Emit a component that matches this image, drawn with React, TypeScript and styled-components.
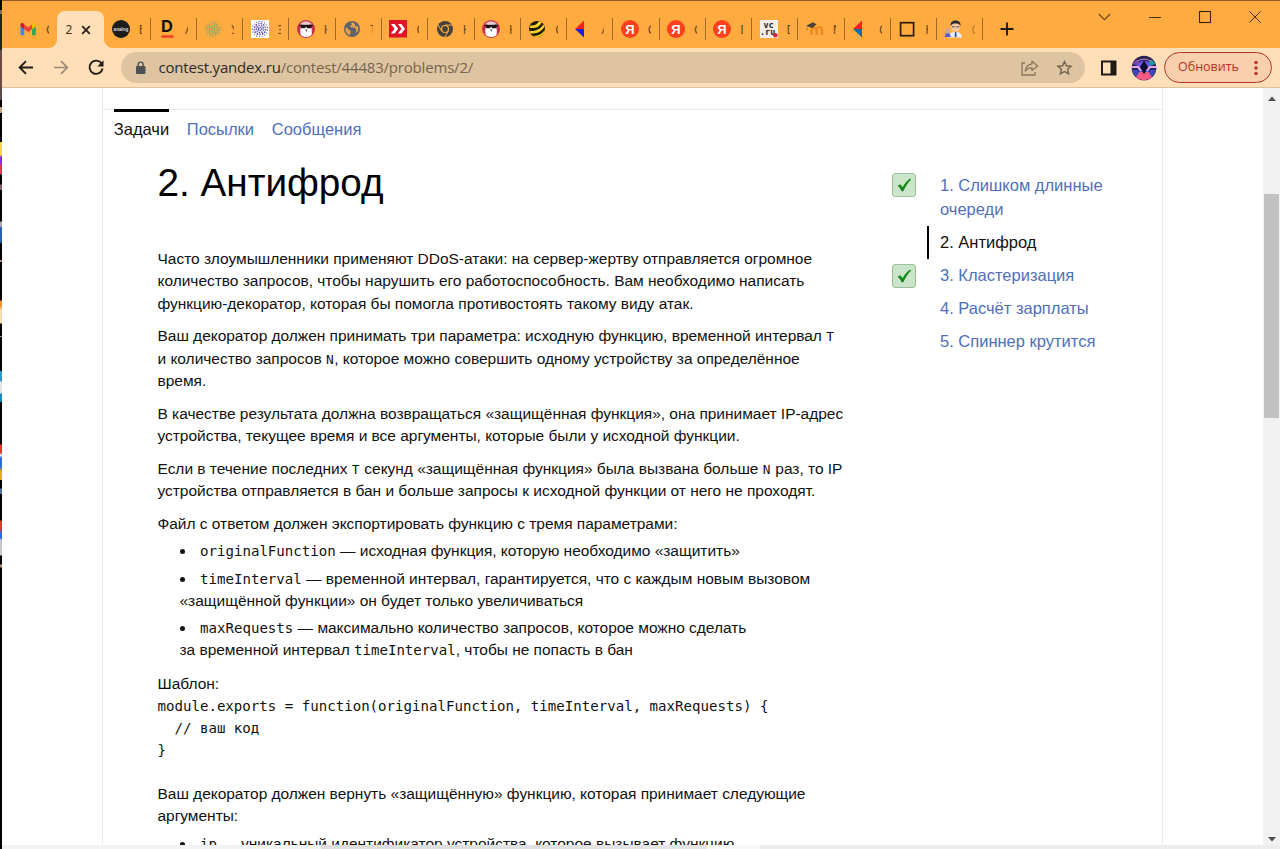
import React from 'react';
import styled, { createGlobalStyle } from 'styled-components';

const GlobalStyle = createGlobalStyle`
  * { box-sizing: border-box; }
  html, body { margin: 0; padding: 0; overflow: hidden; }
  body { background: #fff; font-family: "Liberation Sans", Arial, sans-serif; color: #111; }
`;

/* ---------- window frame ---------- */

const Desktop = styled.div`
  display: flex;
  width: 1280px;
  height: 849px;
  overflow: hidden;
`;

const DesktopEdge = styled.div`
  flex: none;
  width: 2px;
  background: linear-gradient(
    #000 0 10px, #8a6a60 10px 14px, #222 14px 50px, #6b4a44 50px 88px, #5a4a48 88px 100px, #000 100px 107px,
    #c9a088 107px 113px, #000 113px 142px, #f0d840 142px 155px, #8a30d0 157px 164px, #e03a50 165px 174px,
    #000 175px 184px, #8a6070 185px 190px, #000 190px 221px, #aaa 222px 226px, #2a5fb0 228px 242px, #000 244px 260px,
    #b08a70 260px 262px, #000 262px 300px, #f09030 301px 306px, #f4dcae 310px 323px, #000 324px 336px, #999 336px 337px,
    #000 337px 371px, #2e9ac8 371px 381px, #e4e0e8 382px 393px, #1c8ab8 394px 402px, #000 402px 444px,
    #e03a30 445px 453px, #fff 455px, #2a6ae0 458px 467px, #e0b010 471px 480px, #000 480px 488px, #5070a0 489px 494px,
    #000 494px 520px, #e03a30 521px 528px, #2a6ae0 534px 538px, #c8c8c8 540px 555px, #000 556px 564px,
    #b09080 565px 567px, #000 568px 845px
  );
`;

const Window = styled.div`
  flex: 1;
  min-width: 0;
  display: flex;
  flex-direction: column;
  border-top: 1px solid #8a5c22;
`;

/* ---------- tab strip ---------- */

const TabStrip = styled.div`
  display: flex;
  height: 47px;
  flex: none;
  background: #ffab40;
  padding-left: 9.5px;
`;

const tabFont = `
  font-family: "Noto Sans", "Open Sans", sans-serif;
  font-size: 12px;
  color: #4a3418;
`;

const Tab = styled.div<{ $bare?: boolean }>`
  flex: none;
  display: flex;
  align-items: center;
  width: ${(p) => (p.$bare ? 45.9 : 46.28)}px;
  height: 22px;
  margin-top: 17px;
  padding-left: ${(p) => (p.$bare ? 7.5 : 7.4)}px;
  border-right: ${(p) => (p.$bare ? '0' : '1px solid #9c6a2a')};
`;

const TabLabel = styled.span<{ $faint?: boolean }>`
  ${tabFont}
  width: 3px;
  margin-left: 9px;
  overflow: hidden;
  white-space: nowrap;
  opacity: ${(p) => (p.$faint ? 0.4 : 0.85)};
`;

const ActiveTab = styled.div`
  position: relative;
  flex: none;
  display: flex;
  align-items: center;
  width: 47px;
  height: 37px;
  margin-top: 10px;
  padding-left: 8px;
  gap: 9px;
  background: #ffdfb8;
  border-radius: 8px 8px 0 0;
  ${tabFont}
  &::before, &::after {
    content: '';
    position: absolute;
    bottom: 0;
    width: 8px;
    height: 8px;
  }
  &::before { left: -8px; background: radial-gradient(circle at 0 0, transparent 7.5px, #ffdfb8 8px); }
  &::after { right: -8px; background: radial-gradient(circle at 100% 0, transparent 7.5px, #ffdfb8 8px); }
`;

const NewTab = styled.div`
  display: flex;
  align-items: center;
  margin: 8px 0 0 17px;
  height: 40px;
`;

const WindowButtons = styled.div`
  display: flex;
  align-items: center;
  gap: 38px;
  height: 32px;
  margin-left: auto;
  padding-right: 19px;
`;

const Icon = styled.svg`
  display: block;
  flex: none;
  overflow: visible;
`;

const Fav = ({ children }: { children: React.ReactNode }) => (
  <Icon width="18" height="18" viewBox="0 0 18 18">{children}</Icon>
);

const Dots = ({ colors }: { colors: string[] }) => (
  <>
    {[1.6, 3.6, 5.6, 7.6].map((r, ring) =>
      Array.from({ length: 5 + ring * 4 }, (_, i) => {
        const a = (i / (5 + ring * 4)) * Math.PI * 2 + ring * 0.3;
        return (
          <circle
            key={`${ring}-${i}`}
            cx={9 + r * Math.cos(a)}
            cy={9 + r * Math.sin(a)}
            r={ring === 3 ? 0.6 : 0.85}
            fill={colors[(i + ring) % colors.length]}
          />
        );
      }),
    )}
  </>
);

const Gmail = () => (
  <Fav>
    <path d="M1.5 4.5v10.7h3.8V7.4z" fill="#4285f4" />
    <path d="M16.8 4.5v10.7H13V7.4z" fill="#34a853" />
    <path d="M13 4.6v4.6l3.8-2.8V4.8c0-2-2-2.6-3-1.600z" fill="#fbbc04" />
    <path d="M5.300 9.200V4.600l3.850 2.900L13 4.600v4.600l-3.850 2.900z" fill="#ea4335" />
    <path d="M1.500 4.800v1.600l3.800 2.800V4.600L4.400 3.500c-1.200-1-2.900-.3-2.900 1.300z" fill="#c5221f" />
  </Fav>
);

const Brand = () => (
  <Fav>
    <circle cx="9" cy="9" r="9" fill="#1c1c1c" />
    <text x="9" y="10.600" fontSize="4.600" fontWeight="700" textAnchor="middle" fill="#ddd" fontFamily="Liberation Sans">analog</text>
  </Fav>
);

const LetterD = () => (
  <Fav>
    <text x="9" y="12.300" fontSize="16.500" fontWeight="700" textAnchor="middle" fill="#111" fontFamily="Inter">D</text>
    <rect x="3.500" y="15.300" width="12" height="2.400" fill="#f43b2a" />
  </Fav>
);

const GreenDots = () => <Fav><Dots colors={['#7fa868', '#98a858', '#6aa080']} /></Fav>;
const PurpleDots = () => (
  <Fav>
    <rect width="18" height="18" fill="#fff" />
    <Dots colors={['#5a3fa8', '#7c68c0', '#3f55b0']} />
  </Fav>
);

const Penguin = () => (
  <Fav>
    <circle cx="9" cy="9" r="9" fill="#c8324a" />
    <path d="M3.600 14.500C2.500 8 4.500 3 9 3s6.500 5 5.600 11.500C14 17.800 4.500 17.800 3.600 14.500z" fill="#fff" />
    <path d="M2.500 4.500Q9-2 15.500 4.500z" fill="#e8c8d0" />
    <path d="M2.400 4.700h13.400v1.200l-1 .3-.6 2h-4L9 6.600l-1 1.600H4.300l-.8-2-1.100-.3z" fill="#1c1418" />
    <path d="M8 9.500l2.400-.2-1 3z" fill="#6c7a70" />
  </Fav>
);

const Globe = () => (
  <Fav>
    <circle cx="9" cy="9" r="8" fill="#5f6368" />
    <path d="M2.500 7.500c2 .2 3 1 3.200 2.500l1.800.5v2.200l-.8 2.500C4 14 2 11.500 2.500 7.500zM8 2.600l1 1.900-2 1.600 1 1.500h3.500l1.800 2.400-.8 2.800 1.600-.8c1.300-1.700 1.600-3.700 1-5.500l-2.700-.2-.5-2.100L10.500 2.600z" fill="#e6a24a" />
  </Fav>
);

const Chevrons = () => (
  <Fav>
    <rect width="18" height="17.500" fill="#e01428" />
    <path d="M2 4h3.600l3.600 4.800-3.600 4.800H2l3.500-4.800zM9 4h3.400L16 8.800l-3.600 4.800H9l3.500-4.800z" fill="#fff" />
  </Fav>
);

const ChromeDark = () => (
  <Fav>
    <circle cx="9" cy="9" r="8" fill="#45413c" />
    <circle cx="9" cy="9" r="4.100" fill="#ffab40" />
    <path d="M9 5.100h7.500M5.600 11L1.900 4.600M12.300 11l-3.700 6.300" stroke="#ffab40" strokeWidth="1" />
    <circle cx="9" cy="9" r="2.900" fill="#45413c" />
  </Fav>
);

const Bee = () => (
  <Fav>
    <circle cx="9" cy="9" r="8" fill="#1c1a10" />
    <path d="M2.500 5.500C6 6 9.500 4.500 11 1.300l2.700.9C11.500 7 7 9 1.500 7.700z" fill="#ffd42a" />
    <path d="M1.300 10.800c5.500 1 11-1.400 13.900-6.300l1.300 2C13.500 12 8 14.300 2.200 13.200z" fill="#ffd42a" />
    <path d="M5 16c5 .3 9.500-2.200 12-6.200-.7 4.500-4.500 7.700-9 7.200z" fill="#ffd42a" />
  </Fav>
);

const Flag = ({ low }: { low: string }) => (
  <Fav>
    <path d="M10 .500v8.500H1z" fill="#f8201c" />
    <path d="M1 9h9v8.500z" fill={low} />
  </Fav>
);

const Yandex = () => (
  <Fav>
    <circle cx="9" cy="9" r="9" fill="#fc3f1d" />
    <text x="8.800" y="13.700" fontSize="13" fontWeight="700" textAnchor="middle" fill="#fff" fontFamily="Liberation Sans">Я</text>
  </Fav>
);

const VcRu = () => (
  <Fav>
    <rect width="18" height="18" fill="#f6f0ec" />
    <text fontSize="8.500" fontWeight="700" fill="#222" fontFamily="DejaVu Sans Mono">
      <tspan x="3.500" y="7.500">vc</tspan>
      <tspan x="0" y="14.800">.ru</tspan>
    </text>
    <circle cx="15.400" cy="15.200" r="2.200" fill="#e0203a" />
  </Fav>
);

const Moodle = () => (
  <Fav>
    <path d="M5.500 15V9.500a2.800 2.800 0 0 1 5.200 0V15M10.700 9.500a2.700 2.700 0 0 1 5.300 0V15" fill="none" stroke="#f08a20" strokeWidth="2.400" />
    <path d="M.5 5.500L7 2.300l3.500 2-4 3.700-3.500-1z" fill="#4a4238" />
    <path d="M1 5.800v5" stroke="#8a6a40" strokeWidth=".7" />
  </Fav>
);

const BlackSquare = () => (
  <Fav><rect x="2.600" y="2.700" width="13" height="13" fill="none" stroke="#2a1c08" strokeWidth="1.700" /></Fav>
);

const Scientist = () => (
  <Fav>
    <path d="M3 17.500c.5-4 3-5.500 7.500-5.500s6.300 2 6.500 5.500z" fill="#e8ecf4" />
    <path d="M9.900 12h1.500l.3 5h-2z" fill="#3c5a9a" />
    <circle cx="10.500" cy="7" r="4.600" fill="#f0c4a4" />
    <path d="M5.800 6C5 1.800 8 .4 10.500.4s5.700 1.400 4.900 5.600c-1-2-2-2.500-4.800-2.500S7 4 5.800 6z" fill="#24282c" />
    <path d="M6.800 6.800h3M11.300 6.800h3" stroke="#444" strokeWidth=".9" />
    <path d="M1.700 8.500h2v3.500l2 5H-.3l2-5z" fill="#a8a4dc" />
    <path d="M.7 13.500h4l1 3.500h-6z" fill="#5a58d0" />
  </Fav>
);

const TABS: { icon: React.ReactNode; label: string; faint?: boolean }[] = [
  { icon: <Brand />, label: 'Б' },
  { icon: <LetterD />, label: 'А' },
  { icon: <GreenDots />, label: 'У' },
  { icon: <PurpleDots />, label: 'З' },
  { icon: <Penguin />, label: 'Н' },
  { icon: <Globe />, label: 'Т' },
  { icon: <Chevrons />, label: 'С' },
  { icon: <ChromeDark />, label: 'Н' },
  { icon: <Penguin />, label: 'Н' },
  { icon: <Bee />, label: 'С' },
  { icon: <Flag low="#1a20d8" />, label: 'А' },
  { icon: <Yandex />, label: 'С' },
  { icon: <Yandex />, label: 'С' },
  { icon: <Yandex />, label: 'D' },
  { icon: <VcRu />, label: 'D' },
  { icon: <Moodle />, label: 'М' },
  { icon: <Flag low="#1a6a98" />, label: 'С' },
  { icon: <BlackSquare />, label: 'Н' },
  { icon: <Scientist />, label: 'С', faint: true },
];

/* ---------- toolbar ---------- */

const Toolbar = styled.div`
  flex: none;
  display: flex;
  align-items: center;
  height: 40px;
  padding: 0 8px 0 15px;
  background: #ffdfb8;
  border-bottom: 1px solid #dcc0a0;
`;

const NavButtons = styled.div`
  display: flex;
  gap: 17px;
  width: 104px;
`;

const AddressBar = styled.div`
  display: flex;
  align-items: center;
  width: 964px;
  height: 31px;
  padding: 0 12px 0 13px;
  border-radius: 16px;
  background: #dfc4a1;
`;

const Url = styled.div`
  flex: 1;
  padding: 0 0 2px 11.5px;
  font-family: "Open Sans", "Noto Sans", sans-serif;
  font-size: 15px;
  letter-spacing: -0.19px;
  color: #75654f;
  b { font-weight: 400; color: #2c2a27; }
`;

const UpdateButton = styled.div`
  display: flex;
  align-items: center;
  justify-content: space-between;
  width: 108px;
  height: 31px;
  margin-left: auto;
  padding: 0 13px 2px;
  border: 1px solid #b5322a;
  border-radius: 16px;
  background: #f9cfac;
  font-family: "Open Sans", "Noto Sans", sans-serif;
  font-size: 12.5px;
  color: #b5322a;
`;

/* ---------- page ---------- */

const Viewport = styled.div`
  flex: 1;
  min-height: 0;
  display: flex;
  overflow: hidden;
`;

const Page = styled.div`
  width: 1061px;
  margin-left: 99.6px;
  border: solid #ebebeb;
  border-width: 0 1px;
  padding-top: 21px;
  overflow: hidden;
`;

const PageTabs = styled.div`
  display: flex;
  gap: 18px;
  height: 33px;
  padding-left: 11.200px;
  border-top: 1px solid #e8e8e8;
`;

const PageTab = styled.div<{ $active?: boolean; $width: number }>`
  width: ${(p) => p.$width}px;
  margin-top: -1px;
  border-top: 3px solid ${(p) => (p.$active ? '#000' : 'transparent')};
  font-size: 16.5px;
  line-height: 34px;
  white-space: nowrap;
  color: ${(p) => (p.$active ? '#111' : '#4e70ba')};
`;

const Columns = styled.div`
  display: flex;
  padding-left: 54.900px;
`;

const Article = styled.div`
  width: 734.500px;
  flex: none;
  font-size: 15.5px;
  line-height: 22.1px;
  white-space: nowrap;
`;

const Title = styled.h1`
  margin: 16px 0 40.400px;
  font-size: 38.7px;
  font-weight: 400;
  line-height: 50px;
  color: #000;
`;

const Paragraph = styled.p<{ $gap?: number }>`
  margin: 0 0 ${(p) => p.$gap ?? 10.8}px;
`;

const Line = styled.span`
  display: block;
  letter-spacing: -0.02px;
`;

const Code = styled.code<{ $small?: boolean }>`
  font-family: "DejaVu Sans Mono", monospace;
  font-size: ${(p) => (p.$small ? 12.8 : 14.1)}px;
  line-height: 1;
  letter-spacing: ${(p) => (p.$small ? 0.6 : 0)}px;
`;

const List = styled.ul<{ $after?: number }>`
  margin: 0 0 ${(p) => p.$after ?? 0}px;
  padding: 0 0 0 22px;
  list-style: none;
`;

const Item = styled.li`
  margin-bottom: 5.500px;
`;

const Bullet = styled.span`
  display: inline-block;
  width: 5px;
  height: 5px;
  margin: 0 15px 0 .500px;
  border-radius: 50%;
  background: #111;
  vertical-align: 2px;
`;

const Template = styled.pre`
  margin: 0 0 21.500px;
  font-family: "DejaVu Sans Mono", monospace;
  font-size: 14.1px;
  line-height: 22.1px;
`;

const Problems = styled.nav`
  display: flex;
  flex-direction: column;
  padding-top: 26.600px;
`;

const Problem = styled.div`
  display: flex;
  align-items: flex-start;
`;

const Status = styled.div<{ $passed?: boolean }>`
  display: flex;
  align-items: center;
  justify-content: center;
  width: 24px;
  height: 24px;
  margin: 4.400px 11.300px 0 0;
  border: 1px solid #9cc29c;
  border-radius: 3px;
  background: #cbe5cb;
  visibility: ${(p) => (p.$passed ? 'visible' : 'hidden')};
`;

const ProblemName = styled.div<{ $active?: boolean }>`
  padding: 4.100px 0 4.100px 10.700px;
  border-left: 2px solid ${(p) => (p.$active ? '#000' : 'transparent')};
  font-size: 16.5px;
  line-height: 24.800px;
  white-space: pre-line;
  color: ${(p) => (p.$active ? '#111' : '#4e70ba')};
`;

const Scrollbar = styled.div`
  display: flex;
  flex-direction: column;
  align-items: center;
  justify-content: space-between;
  width: 17px;
  margin-left: auto;
  padding: 8px 0 3px;
  background: #f1f1f1;
`;

const ScrollTrack = styled.div`
  flex: 1;
  width: 15px;
  padding-top: 93px;
`;

const Thumb = styled.div`
  height: 224px;
  background: #c1c1c1;
`;

const BottomEdge = styled.div`
  flex: none;
  height: 4px;
  background: linear-gradient(90deg, #f3f3f3 0 319px, #dedede 319px 430px, #e6e6e6 705px, #f8f8f8 705px 758px, #ececec 758px);
`;

const PROBLEMS = [
  { name: '1. Слишком длинные\nочереди', passed: true },
  { name: '2. Антифрод', active: true },
  { name: '3. Кластеризация', passed: true },
  { name: '4. Расчёт зарплаты' },
  { name: '5. Спиннер крутится' },
];

const CODE = `module.exports = function(originalFunction, timeInterval, maxRequests) {
  // ваш код
}`;

export default function App() {
  return (
    <Desktop>
      <GlobalStyle />
      <DesktopEdge />
      <Window>
        <TabStrip>
          <Tab $bare>
            <Gmail />
            <TabLabel>С</TabLabel>
          </Tab>
          <ActiveTab>
            <span>2</span>
            <Icon width="10" height="10" viewBox="0 0 10 10">
              <path d="M1.200 1.200l7.600 7.600M8.800 1.200L1.200 8.800" stroke="#2a2016" strokeWidth="1.800" />
            </Icon>
          </ActiveTab>
          {TABS.map((t, i) => (
            <Tab key={i}>
              {t.icon}
              <TabLabel $faint={t.faint}>{t.label}</TabLabel>
            </Tab>
          ))}
          <NewTab>
            <Icon width="14" height="14" viewBox="0 0 14 14">
              <path d="M7 .500v13M.500 7h13" stroke="#241a0c" strokeWidth="1.900" />
            </Icon>
          </NewTab>
          <WindowButtons>
            <Icon width="13" height="12" viewBox="0 0 13 12">
              <path d="M.800 3l5.700 5.700L12.200 3" fill="none" stroke="#6a4618" strokeWidth="1.100" />
            </Icon>
            <Icon width="12" height="12" viewBox="0 0 12 12">
              <path d="M0 6.500h12" stroke="#4a3010" strokeWidth="1" />
            </Icon>
            <Icon width="12" height="12" viewBox="0 0 12 12">
              <rect x=".500" y=".500" width="11" height="11" fill="none" stroke="#3a260a" strokeWidth="1.100" />
            </Icon>
            <Icon width="12" height="12" viewBox="0 0 12 12">
              <path d="M.400.400l11.200 11.200M11.600.400L.400 11.600" stroke="#4a3010" strokeWidth="1" />
            </Icon>
          </WindowButtons>
        </TabStrip>

        <Toolbar>
          <NavButtons>
            <Icon width="18" height="18" viewBox="0 0 18 18">
              <path d="M16 8.500H3M9 2.200L2.700 8.500 9 14.800" fill="none" stroke="#1f1b16" strokeWidth="1.900" />
            </Icon>
            <Icon width="18" height="18" viewBox="0 0 18 18">
              <path d="M2 8.500h13M9 2.200L15.300 8.500 9 14.800" fill="none" stroke="#9b8a75" strokeWidth="1.700" />
            </Icon>
            <Icon width="18" height="18" viewBox="0 0 18 18">
              <path d="M14.700 4.700A6.600 6.600 0 1 0 15.600 9.500" fill="none" stroke="#1f1b16" strokeWidth="1.900" />
              <path d="M16.500 1.300v6.200h-6.200z" fill="#1f1b16" />
            </Icon>
          </NavButtons>
          <AddressBar>
            <Icon width="13" height="14" viewBox="0 0 13 14">
              <rect x="2" y="5" width="9.500" height="8" rx="1" fill="#4d5156" />
              <path d="M4.200 5.500V3.600a2.500 2.500 0 0 1 5 0v1.900" fill="none" stroke="#4d5156" strokeWidth="1.400" />
            </Icon>
            <Url><b>contest.yandex.ru</b>/contest/44483/problems/2/</Url>
            <Icon width="18" height="16" viewBox="0 0 18 16">
              <path d="M4 3H1v12h13v-3" fill="none" stroke="#857660" strokeWidth="1.300" />
              <path d="M11 1.200l5.600 4.700L11 10.500V7.800C8 7.700 6 8.600 4.300 11 4.800 7.200 7 4.400 11 3.900z" fill="none" stroke="#857660" strokeWidth="1.300" strokeLinejoin="round" />
            </Icon>
            <Icon width="34" height="16" viewBox="0 0 34 16">
              <path d="M25.500 1.500l1.900 4.300 4.700.4-3.500 3.100 1 4.600L25.500 11.500l-4.100 2.400 1-4.600-3.500-3.100 4.700-.4z" fill="none" stroke="#6e6250" strokeWidth="1.400" />
            </Icon>
          </AddressBar>
          <Icon width="46" height="16" viewBox="0 0 46 16">
            <rect x="17" y="1.500" width="13.500" height="13" fill="none" stroke="#1f1b16" strokeWidth="2" />
            <rect x="25.500" y="1.500" width="5" height="13" fill="#1f1b16" />
          </Icon>
          <Icon width="26" height="26" viewBox="0 0 26 26">
            <circle cx="13" cy="13" r="12.300" fill="#251f50" />
            <path d="M2 9a12 12 0 0 1 3.500-4.500L9 7.500 6.500 11z" fill="#7a3fa0" />
            <path d="M24 9a12 12 0 0 0-3.500-4.500L17 7.500l2.500 3.500z" fill="#1e9aa0" />
            <path d="M6 6.500C9 3.200 17 3.200 20 6.500" fill="none" stroke="#a070b8" strokeWidth="1.200" />
            <circle cx="13" cy="12" r="6.500" fill="#6a5cf0" />
            <path d="M0 11h7.500l2 2.500h7l2-2.500H26v2h-6.500L16.500 16h-7l-3-3H0z" fill="#e4a8e8" />
            <path d="M1.500 14.500l5 .5 4 4h5l4-4 5-.5A12 12 0 0 1 13 25.300 12 12 0 0 1 1.500 14.500z" fill="#3c48c0" />
            <path d="M5 22.300L8.500 17h9l3.500 5.300A12.300 12.300 0 0 1 5 22.300z" fill="#fa5a80" />
            <path d="M13 5l4 7-4 7.500L9 12z" fill="#0c1030" />
          </Icon>
          <UpdateButton>
            <span>Обновить</span>
            <Icon width="4" height="16" viewBox="0 0 4 16">
              <circle cx="2" cy="3.500" r="1.700" fill="#b5322a" />
              <circle cx="2" cy="9" r="1.700" fill="#b5322a" />
              <circle cx="2" cy="14.500" r="1.700" fill="#b5322a" />
            </Icon>
          </UpdateButton>
        </Toolbar>

        <Viewport>
          <Page>
            <PageTabs>
              <PageTab $active $width={55}>Задачи</PageTab>
              <PageTab $width={67}>Посылки</PageTab>
              <PageTab $width={90}>Сообщения</PageTab>
            </PageTabs>
            <Columns>
              <Article>
                <Title>2. Антифрод</Title>
                <Paragraph>
                  <Line>Часто злоумышленники применяют DDoS-атаки: на сервер-жертву отправляется огромное</Line>
                  <Line>количество запросов, чтобы нарушить его работоспособность. Вам необходимо написать</Line>
                  <Line>функцию-декоратор, которая бы помогла противостоять такому виду атак.</Line>
                </Paragraph>
                <Paragraph>
                  <Line>Ваш декоратор должен принимать три параметра: исходную функцию, временной интервал <Code $small>T</Code></Line>
                  <Line>и количество запросов <Code $small>N</Code>, которое можно совершить одному устройству за определённое</Line>
                  <Line>время.</Line>
                </Paragraph>
                <Paragraph>
                  <Line>В качестве результата должна возвращаться «защищённая функция», она принимает IP-адрес</Line>
                  <Line>устройства, текущее время и все аргументы, которые были у исходной функции.</Line>
                </Paragraph>
                <Paragraph>
                  <Line>Если в течение последних <Code $small>T</Code> секунд «защищённая функция» была вызвана больше <Code $small>N</Code> раз, то IP</Line>
                  <Line>устройства отправляется в бан и больше запросы к исходной функции от него не проходят.</Line>
                </Paragraph>
                <Paragraph $gap={5.5}>
                  <Line>Файл с ответом должен экспортировать функцию с тремя параметрами:</Line>
                </Paragraph>
                <List $after={11.4}>
                  <Item>
                    <Line><Bullet /><Code>originalFunction</Code> — исходная функция, которую необходимо «защитить»</Line>
                  </Item>
                  <Item>
                    <Line><Bullet /><Code>timeInterval</Code> — временной интервал, гарантируется, что с каждым новым вызовом</Line>
                    <Line>«защищённой функции» он будет только увеличиваться</Line>
                  </Item>
                  <Item>
                    <Line><Bullet /><Code>maxRequests</Code> — максимально количество запросов, которое можно сделать</Line>
                    <Line>за временной интервал <Code>timeInterval</Code>, чтобы не попасть в бан</Line>
                  </Item>
                </List>
                <Paragraph $gap={0}>
                  <Line>Шаблон:</Line>
                </Paragraph>
                <Template>{CODE}</Template>
                <Paragraph $gap={5.5}>
                  <Line>Ваш декоратор должен вернуть «защищённую» функцию, которая принимает следующие</Line>
                  <Line>аргументы:</Line>
                </Paragraph>
                <List>
                  <Item>
                    <Line><Bullet /><Code>ip</Code> — уникальный идентификатор устройства, которое вызывает функцию</Line>
                  </Item>
                </List>
              </Article>
              <Problems>
                {PROBLEMS.map((p) => (
                  <Problem key={p.name}>
                    <Status $passed={p.passed}>
                      <Icon width="16" height="16" viewBox="0 0 16 16">
                        <path d="M1.600 8.800l2.600-1.500 2.500 3C8.500 6.600 11 3.600 14.200 1.600l.9 1C12 5.800 9.400 9.800 7.300 14.300H5.500C4.700 12 3.400 10.200 1.600 8.800z" fill="#14891a" />
                      </Icon>
                    </Status>
                    <ProblemName $active={p.active}>{p.name}</ProblemName>
                  </Problem>
                ))}
              </Problems>
            </Columns>
          </Page>
          <Scrollbar>
            <Icon width="8" height="5" viewBox="0 0 8 5"><path d="M0 5l4-4.500L8 5z" fill="#505050" /></Icon>
            <ScrollTrack><Thumb /></ScrollTrack>
            <Icon width="8" height="5" viewBox="0 0 8 5"><path d="M0 0l4 4.500L8 0z" fill="#505050" /></Icon>
          </Scrollbar>
        </Viewport>
        <BottomEdge />
      </Window>
    </Desktop>
  );
}
